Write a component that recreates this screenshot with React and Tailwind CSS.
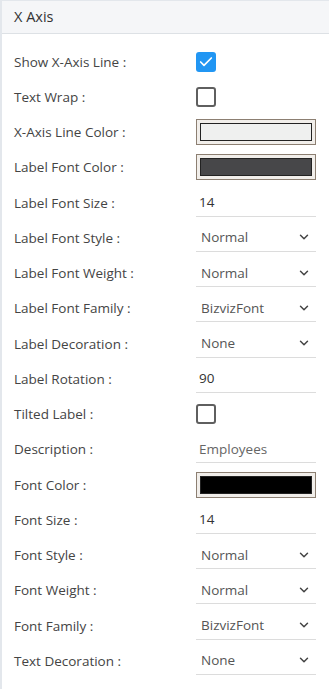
import { ChevronDown, Check } from 'lucide-react'

const rows = [
  { label: 'Show X-Axis Line :', type: 'check', checked: true },
  { label: 'Text Wrap :', type: 'check' },
  { label: 'X-Axis Line Color :', type: 'color', color: 'bg-[#eff0ef]' },
  { label: 'Label Font Color :', type: 'color', color: 'bg-[#474749]' },
  { label: 'Label Font Size :', type: 'input', value: '14' },
  { label: 'Label Font Style :', type: 'select', value: 'Normal' },
  { label: 'Label Font Weight :', type: 'select', value: 'Normal' },
  { label: 'Label Font Family :', type: 'select', value: 'BizvizFont' },
  { label: 'Label Decoration :', type: 'select', value: 'None' },
  { label: 'Label Rotation :', type: 'input', value: '90' },
  { label: 'Tilted Label :', type: 'check' },
  { label: 'Description :', type: 'input', value: 'Employees', muted: true },
  { label: 'Font Color :', type: 'color', color: 'bg-black' },
  { label: 'Font Size :', type: 'input', value: '14' },
  { label: 'Font Style :', type: 'select', value: 'Normal' },
  { label: 'Font Weight :', type: 'select', value: 'Normal' },
  { label: 'Font Family :', type: 'select', value: 'BizvizFont' },
  { label: 'Text Decoration :', type: 'select', value: 'None' },
]

function Control({ row }) {
  if (row.type === 'check') {
    return row.checked ? (
      <div className="flex h-5 w-5 items-center justify-center rounded-[3px] bg-[#2196f3]">
        <Check size={16} strokeWidth={2.5} className="text-white" />
      </div>
    ) : (
      <div className="h-5 w-5 rounded-[3px] border-2 border-[#5f5f5f] bg-white" />
    )
  }
  if (row.type === 'color') {
    return (
      <div className="h-[26px] w-[120px] border border-[#8c7f72] bg-[#f1eeea] p-[3px]">
        <div className={`h-full w-full border border-[#222] ${row.color}`} />
      </div>
    )
  }
  if (row.type === 'input') {
    return (
      <div className={`flex h-[28px] w-[120px] items-center border-b border-[#dcdcdc] pl-[3px] text-[13.5px] ${row.muted ? 'text-[#666]' : 'text-[#333]'}`}>
        {row.value}
      </div>
    )
  }
  return (
    <div className="flex h-[28px] w-[120px] items-center justify-between border-b border-[#dcdcdc] pl-[5px] pr-[5px] text-[13.5px] text-[#555]">
      <span>{row.value}</span>
      <ChevronDown size={14} strokeWidth={2.5} className="text-[#444]" />
    </div>
  )
}

export default function App() {
  return (
    <div className="min-h-screen border-l-2 border-t border-[#e3e7ec] bg-white font-['Open_Sans',sans-serif] text-[#444]">
      <div className="flex h-[33px] items-center border-b border-[#dde1e5] bg-[#f5f6f8] px-3 text-[14.5px] text-[#333]">
        X Axis
      </div>
      <div className="flex flex-col pt-[10px]">
        {rows.map((row) => (
          <div key={row.label} className="flex h-[35.25px] items-center pl-3">
            <div className="w-[182px] text-[13.5px]">{row.label}</div>
            <Control row={row} />
          </div>
        ))}
      </div>
    </div>
  )
}
